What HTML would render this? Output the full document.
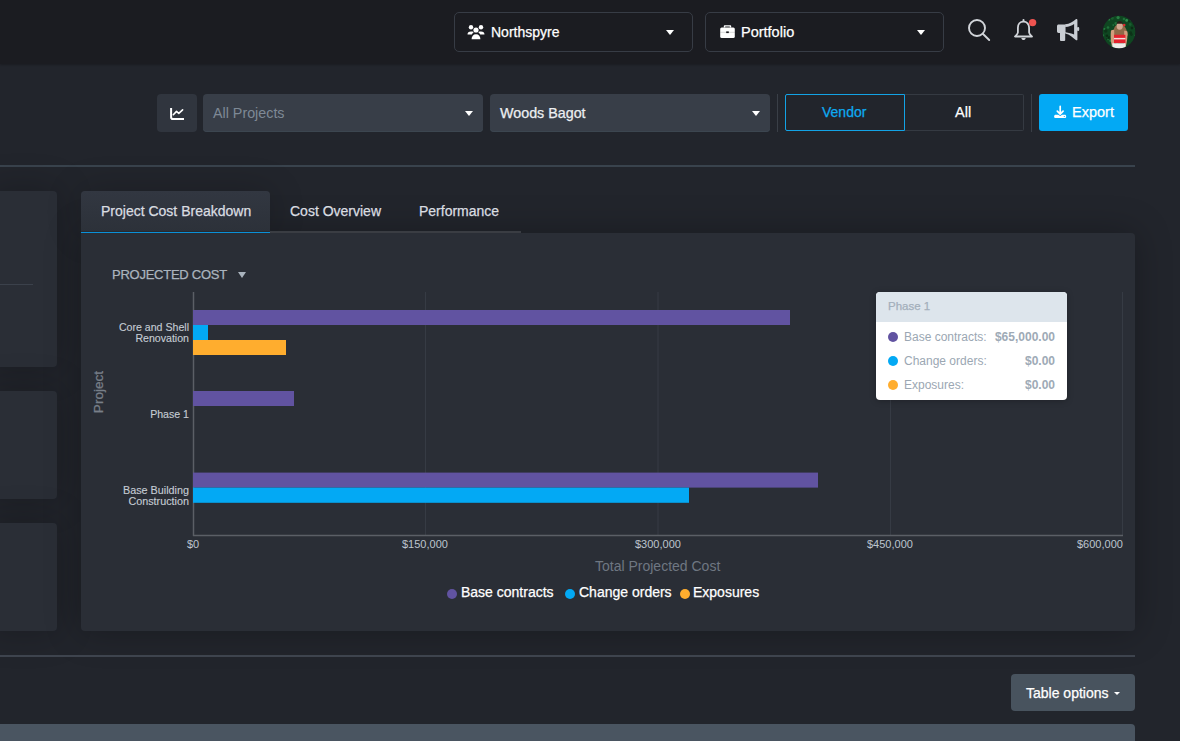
<!DOCTYPE html>
<html><head><meta charset="utf-8">
<style>
*{box-sizing:border-box;margin:0;padding:0}
html,body{width:1180px;height:741px;overflow:hidden;background:#22252c;font-family:"Liberation Sans",sans-serif;position:relative}
.a{position:absolute}
.t{position:absolute;white-space:nowrap;line-height:1}
#top{left:0;top:0;width:1180px;height:64px;background:#1b1c21;box-shadow:0 1px 2px rgba(0,0,0,.25)}
.dd{position:absolute;top:12px;height:40px;width:239px;border:1px solid #373c45;border-radius:5px;background:#1b1c21}
.caret{position:absolute;width:0;height:0;border-left:4.6px solid transparent;border-right:4.6px solid transparent;border-top:5.6px solid #fff}
.sel{position:absolute;top:94px;height:38px;background:#383e48;border-radius:4px}
.bb{box-shadow:inset 0 -1px 0 #3c4650}
.panel{position:absolute;background:#2a2e36;border-radius:4px;box-shadow:0 0 36px rgba(0,0,0,.25)}
.med{-webkit-text-stroke:0.25px currentColor}
.ml{-webkit-text-stroke:0.12px currentColor}
</style></head>
<body>
<!-- top bar -->
<div id="top" class="a"></div>
<div class="dd" style="left:454px">
  <svg class="a" style="left:12px;top:12px" width="18" height="15" viewBox="0 0 18 15">
    <g fill="#fff">
      <circle cx="4" cy="2.3" r="2.2"/><circle cx="14" cy="2.3" r="2.2"/><circle cx="9" cy="5" r="2.6"/>
      <path d="M0.5 9.5c0-2 1.2-3 3.5-3s2.2.6 2.6 1c-1 .6-1.6 1.4-1.8 2H.5z"/>
      <path d="M17.5 9.5c0-2-1.2-3-3.5-3s-2.2.6-2.6 1c1 .6 1.6 1.4 1.8 2h4.3z"/>
      <path d="M4.6 14.3c0-3 1.6-5 4.4-5s4.4 2 4.4 5z"/>
    </g>
  </svg>
  <span class="t med" style="left:36px;top:12px;font-size:14px;color:#fff">Northspyre</span>
  <div class="caret" style="left:211px;top:17px"></div>
</div>
<div class="dd" style="left:705px">
  <svg class="a" style="left:14px;top:12px" width="15" height="14" viewBox="0 0 15 14">
    <g fill="#fff">
      <path d="M4.8 0.2h5.4c.6 0 1 .4 1 1V2.6H9.8V1.6H5.2v1H3.8V1.2c0-.6.4-1 1-1z"/>
      <rect x="0.2" y="2.5" width="14.6" height="10.6" rx="1.5"/>
    </g>
    <rect x="0.2" y="6.9" width="14.6" height=".5" fill="#1b1c21" opacity=".35"/>
    <rect x="6.2" y="6.4" width="2.6" height="1.7" fill="#1b1c21"/>
  </svg>
  <span class="t med" style="left:35px;top:12px;font-size:14.5px;color:#fff">Portfolio</span>
  <div class="caret" style="left:211px;top:17px"></div>
</div>
<!-- search -->
<svg class="a" style="left:964px;top:15px" width="30" height="30" viewBox="0 0 30 30">
  <circle cx="13" cy="13" r="8" fill="none" stroke="#d2d5da" stroke-width="1.9"/>
  <line x1="18.8" y1="18.8" x2="25.2" y2="25" stroke="#d2d5da" stroke-width="1.9" stroke-linecap="round"/>
</svg>
<!-- bell -->
<svg class="a" style="left:1012px;top:17px" width="26" height="26" viewBox="0 0 26 26">
  <path d="M11.5 4.6C8 4.6 5.9 7.3 5.9 10.8V15.6C5.9 16.9 4.3 18.3 3 19.5H20C18.7 18.3 17.1 16.9 17.1 15.6V10.8C17.1 7.3 15 4.6 11.5 4.6Z" fill="none" stroke="#d2d5da" stroke-width="1.8" stroke-linejoin="round"/>
  <rect x="10.5" y="1.9" width="2" height="2.8" rx="1" fill="#d2d5da"/>
  <path d="M9.3 21h4.4c-.3 1.4-1.1 2.1-2.2 2.1S9.6 22.4 9.3 21z" fill="#d2d5da"/>
  <circle cx="20.6" cy="5.6" r="3.7" fill="#ef5350"/>
</svg>
<!-- megaphone -->
<svg class="a" style="left:1050px;top:12px" width="34" height="34" viewBox="0 0 34 34">
  <g fill="#c9cdd3">
    <path d="M8.6 12.4h7v8.5h-7c-.9 0-1.6-.7-1.6-1.6v-5.3c0-.9.7-1.6 1.6-1.6z"/>
    <path d="M10 20.5h5.2v7.6c0 .5-.4.9-.9.9h-3.4c-.5 0-.9-.4-.9-.9z"/>
    <path d="M15.2 12.3c4.5-.3 7.8-2.5 10.6-5 .6-.5 1.6-.1 1.6.7v19.4c0 .8-1 1.2-1.6.7-2.8-2.5-6.1-5.6-10.6-6.6z"/>
    <rect x="27" y="15" width="2.2" height="4" rx="1.1"/>
  </g>
  <path d="M15.6 15.1c3.3-.2 6-1.3 8.5-3v10.4c-2.5-1-5.2-1.8-8.5-2.3z" fill="#1b1c21"/>
</svg>
<!-- avatar -->
<svg class="a" style="left:1102px;top:15px" width="34" height="34" viewBox="0 0 34 34">
  <defs>
    <clipPath id="cc"><circle cx="17" cy="17" r="16.3"/></clipPath>
  </defs>
  <g clip-path="url(#cc)">
    <rect width="34" height="34" fill="#0f4621"/>
    <circle cx="15.4" cy="19.0" r="1.7" fill="#0d2e16" opacity=".8"/><circle cx="15.4" cy="29.1" r="0.9" fill="#3aa05a" opacity=".8"/><circle cx="16.2" cy="20.9" r="0.9" fill="#0d2e16" opacity=".8"/><circle cx="10.3" cy="3.1" r="1.6" fill="#1b6432" opacity=".8"/><circle cx="21.6" cy="20.2" r="1.1" fill="#0d2e16" opacity=".8"/><circle cx="22.2" cy="20.9" r="0.9" fill="#2f8c4c" opacity=".8"/><circle cx="28.3" cy="2.1" r="0.7" fill="#237a3e" opacity=".8"/><circle cx="20.4" cy="26.5" r="1.1" fill="#3aa05a" opacity=".8"/><circle cx="28.6" cy="17.7" r="1.4" fill="#0d2e16" opacity=".8"/><circle cx="0.2" cy="2.9" r="1.4" fill="#0d2e16" opacity=".8"/><circle cx="33.9" cy="33.9" r="1.6" fill="#1b6432" opacity=".8"/><circle cx="8.6" cy="25.8" r="1.3" fill="#2f8c4c" opacity=".8"/><circle cx="2.4" cy="26.1" r="1.1" fill="#0a2612" opacity=".8"/><circle cx="13.1" cy="32.6" r="1.6" fill="#2f8c4c" opacity=".8"/><circle cx="7.3" cy="31.5" r="0.8" fill="#0d2e16" opacity=".8"/><circle cx="33.3" cy="13.5" r="0.8" fill="#1b6432" opacity=".8"/><circle cx="6.7" cy="22.9" r="1.1" fill="#0a2612" opacity=".8"/><circle cx="11.3" cy="32.8" r="1.5" fill="#2f8c4c" opacity=".8"/><circle cx="4.6" cy="24.0" r="0.7" fill="#0d2e16" opacity=".8"/><circle cx="27.1" cy="6.0" r="1.3" fill="#0d2e16" opacity=".8"/><circle cx="17.3" cy="33.5" r="1.5" fill="#0d2e16" opacity=".8"/><circle cx="21.9" cy="4.0" r="1.2" fill="#237a3e" opacity=".8"/><circle cx="0.0" cy="29.4" r="1.8" fill="#3aa05a" opacity=".8"/><circle cx="10.3" cy="30.1" r="0.9" fill="#0d2e16" opacity=".8"/><circle cx="33.9" cy="20.5" r="1.3" fill="#2f8c4c" opacity=".8"/><circle cx="33.6" cy="7.3" r="1.0" fill="#3aa05a" opacity=".8"/><circle cx="11.2" cy="10.1" r="0.8" fill="#2f8c4c" opacity=".8"/><circle cx="7.1" cy="21.6" r="0.7" fill="#0a2612" opacity=".8"/><circle cx="12.6" cy="15.4" r="1.8" fill="#0d2e16" opacity=".8"/><circle cx="28.3" cy="4.6" r="1.1" fill="#1b6432" opacity=".8"/><circle cx="5.2" cy="30.9" r="1.6" fill="#237a3e" opacity=".8"/><circle cx="24.7" cy="5.4" r="1.4" fill="#3aa05a" opacity=".8"/><circle cx="6.7" cy="32.3" r="1.7" fill="#3aa05a" opacity=".8"/><circle cx="2.7" cy="1.6" r="0.8" fill="#3aa05a" opacity=".8"/><circle cx="32.7" cy="8.1" r="1.5" fill="#0a2612" opacity=".8"/><circle cx="14.3" cy="30.8" r="1.2" fill="#3aa05a" opacity=".8"/><circle cx="6.0" cy="24.5" r="0.8" fill="#237a3e" opacity=".8"/><circle cx="16.3" cy="22.2" r="1.4" fill="#2f8c4c" opacity=".8"/><circle cx="9.5" cy="31.2" r="0.9" fill="#2f8c4c" opacity=".8"/><circle cx="2.4" cy="14.0" r="1.0" fill="#2f8c4c" opacity=".8"/><circle cx="6.0" cy="12.5" r="1.3" fill="#237a3e" opacity=".8"/><circle cx="3.1" cy="4.7" r="1.2" fill="#0a2612" opacity=".8"/><circle cx="22.3" cy="23.5" r="1.3" fill="#237a3e" opacity=".8"/><circle cx="20.1" cy="31.4" r="1.2" fill="#0a2612" opacity=".8"/><circle cx="23.8" cy="32.7" r="0.7" fill="#1b6432" opacity=".8"/><circle cx="2.5" cy="2.3" r="1.0" fill="#237a3e" opacity=".8"/><circle cx="34.0" cy="2.6" r="1.3" fill="#1b6432" opacity=".8"/><circle cx="1.5" cy="31.8" r="1.5" fill="#237a3e" opacity=".8"/><circle cx="27.0" cy="31.1" r="1.1" fill="#1b6432" opacity=".8"/><circle cx="16.1" cy="2.6" r="1.6" fill="#2f8c4c" opacity=".8"/><circle cx="29.4" cy="19.5" r="1.4" fill="#0d2e16" opacity=".8"/><circle cx="12.9" cy="0.4" r="0.8" fill="#2f8c4c" opacity=".8"/><circle cx="21.7" cy="33.8" r="1.7" fill="#1b6432" opacity=".8"/><circle cx="11.2" cy="31.8" r="1.5" fill="#0d2e16" opacity=".8"/><circle cx="15.0" cy="28.5" r="0.8" fill="#3aa05a" opacity=".8"/><circle cx="1.0" cy="20.4" r="1.2" fill="#237a3e" opacity=".8"/><circle cx="32.6" cy="3.8" r="1.6" fill="#1b6432" opacity=".8"/><circle cx="31.3" cy="8.7" r="0.7" fill="#0a2612" opacity=".8"/><circle cx="4.9" cy="20.8" r="1.3" fill="#0a2612" opacity=".8"/><circle cx="22.4" cy="15.0" r="1.7" fill="#0a2612" opacity=".8"/><circle cx="13.8" cy="8.5" r="1.4" fill="#237a3e" opacity=".8"/><circle cx="29.9" cy="13.1" r="1.3" fill="#0a2612" opacity=".8"/><circle cx="7.1" cy="4.6" r="1.1" fill="#2f8c4c" opacity=".8"/><circle cx="24.2" cy="32.3" r="1.0" fill="#237a3e" opacity=".8"/><circle cx="3.8" cy="16.0" r="1.7" fill="#0d2e16" opacity=".8"/><circle cx="13.0" cy="17.7" r="1.4" fill="#1b6432" opacity=".8"/><circle cx="28.5" cy="33.4" r="1.2" fill="#2f8c4c" opacity=".8"/><circle cx="28.2" cy="9.5" r="1.4" fill="#1b6432" opacity=".8"/><circle cx="24.1" cy="19.4" r="1.0" fill="#3aa05a" opacity=".8"/><circle cx="0.6" cy="4.6" r="1.2" fill="#2f8c4c" opacity=".8"/>
    <path d="M11.5 20.5c-.5-5 .5-9.5 3.5-10.5h5.5c3 1 4.5 5.5 5.5 10.5z" fill="#8e6a48"/>
    <path d="M9 15.5c1-.8 2.2-1 3.2-.8l.2 15.8H9.8c-1.2-4-1.4-11-.8-15z" fill="#d39c7c"/>
    <path d="M25.4 16.5c-1-.8-2.2-1-3.2-.8l-.2 15.8h1.8c1.2-4 2-11 1.6-15z" fill="#d39c7c"/>
    <ellipse cx="17.7" cy="11" rx="3.1" ry="3.8" fill="#d2a890"/>
    <path d="M14.4 8.8c.6-2 2-2.8 3.4-2.8s2.8.8 3.3 2.8z" fill="#2a1e18"/>
    <path d="M12 19.7h11.4l.1 8.6H12z" fill="#e3222c"/>
    <rect x="12" y="22.9" width="11.4" height="1.5" fill="#f3dcdc"/>
    <path d="M10.4 28.3h13l.4 6h-13.6z" fill="#efeeea"/>
    <circle cx="22.2" cy="10" r="1.3" fill="#e3262e"/>
  </g>
</svg>

<!-- toolbar row -->
<div class="sel" style="left:157px;width:40px;background:#30353e">
  <svg class="a" style="left:12px;top:13px" width="16" height="14" viewBox="0 0 16 14">
    <path d="M2.1 0.9V10.2Q2.1 12 3.9 12H15" fill="none" stroke="#fff" stroke-width="2"/>
    <path d="M4.3 7.7l3.2-3.3 2.3 2 3.8-3.6" fill="none" stroke="#fff" stroke-width="1.6" stroke-linecap="round" stroke-linejoin="round"/>
  </svg>
</div>
<div class="sel bb" style="left:203px;width:280px">
  <span class="t" style="left:10px;top:12px;font-size:14.3px;color:#7e8996">All Projects</span>
  <div class="caret" style="left:262px;top:17px;border-left-width:4.5px;border-right-width:4.5px;border-top-width:5px"></div>
</div>
<div class="sel bb" style="left:490px;width:280px">
  <span class="t med" style="left:10px;top:12px;font-size:14.3px;color:#eceef1">Woods Bagot</span>
  <div class="caret" style="left:262px;top:17px;border-left-width:4.5px;border-right-width:4.5px;border-top-width:5px"></div>
</div>
<div class="a" style="left:777px;top:94px;width:1px;height:38px;background:#3a3f47"></div>
<div class="a" style="left:785px;top:94px;width:120px;height:37px;border:1px solid #13a3e6;border-radius:2px 0 0 2px"></div>
<span class="t med" style="left:822px;top:105px;font-size:14px;color:#0eaaf2">Vendor</span>
<div class="a" style="left:905px;top:94px;width:119px;height:37px;border:1px solid #353a42;border-left:none;border-radius:0 2px 2px 0"></div>
<span class="t med" style="left:955px;top:105px;font-size:14.5px;color:#fff">All</span>
<div class="a" style="left:1031px;top:94px;width:1px;height:38px;background:#3a3f47"></div>
<div class="a" style="left:1039px;top:94px;width:89px;height:37px;background:#03a9f4;border-radius:3px">
  <svg class="a" style="left:14px;top:11px" width="15" height="15" viewBox="0 0 15 15">
    <path d="M7.2 1.4v7.6M4.3 6.2l2.9 2.9 2.9-2.9" fill="none" stroke="#fff" stroke-width="1.7" stroke-linecap="round" stroke-linejoin="round"/>
    <path d="M2.6 9.8h2.6l2 1.2 2-1.2h2.6c.8 0 1.4.7 1.4 1.6s-.6 1.6-1.4 1.6H2.6c-.8 0-1.5-.7-1.5-1.6s.7-1.6 1.5-1.6z" fill="#fff"/>
    <circle cx="11.3" cy="11.5" r=".6" fill="#03a9f4"/>
  </svg>
  <span class="t med" style="left:33px;top:11px;font-size:14.5px;color:#fff">Export</span>
</div>
<div class="a" style="left:0;top:165px;width:1135px;height:2px;background:#39434d"></div>

<!-- left panels -->
<div class="panel" style="left:-10px;top:191px;width:67px;height:176px">
  <div class="a" style="left:10px;top:93px;width:33px;height:1px;background:#3b414b"></div>
</div>
<div class="panel" style="left:-10px;top:391px;width:67px;height:108px"></div>
<div class="panel" style="left:-10px;top:523px;width:67px;height:108px"></div>

<!-- chart card -->
<div class="a" style="left:81px;top:233px;width:1054px;height:398px;box-shadow:0 0 36px rgba(0,0,0,.28);border-radius:4px"></div>
<div class="a" style="left:81px;top:191px;width:189px;height:42px;box-shadow:0 0 36px rgba(0,0,0,.2);border-radius:4px"></div>
<div class="a" style="left:81px;top:191px;width:189px;height:42px;background:linear-gradient(#323741,#2c3139);border-radius:4px 4px 0 0"></div>
<div class="a" style="left:81px;top:231px;width:440px;height:2px;background:#3a3d43"></div>
<div class="a" style="left:81px;top:231px;width:189px;height:1px;background:#272a30"></div>
<div class="a" style="left:81px;top:232px;width:189px;height:1px;background:#0a90d8"></div>
<span class="t med" style="left:101px;top:204px;font-size:14px;color:#dadde1">Project Cost Breakdown</span>
<span class="t med" style="left:290px;top:204px;font-size:14px;color:#dadde1">Cost Overview</span>
<span class="t med" style="left:419px;top:204px;font-size:14px;color:#dadde1">Performance</span>
<div class="a" style="left:81px;top:233px;width:1054px;height:398px;background:#2a2e36;border-radius:0 4px 4px 4px"></div>

<span class="t med" style="left:112px;top:268px;font-size:13px;letter-spacing:-0.25px;color:#aab4be">PROJECTED COST</span>
<div class="caret" style="left:238px;top:272px;border-left-width:4.5px;border-right-width:4.5px;border-top-width:6px;border-top-color:#a9b3bd"></div>

<!-- chart -->
<svg class="a" style="left:0;top:0" width="1180" height="741" viewBox="0 0 1180 741">
  <g stroke="#363b44" stroke-width="1">
    <line x1="425.5" y1="292" x2="425.5" y2="535"/>
    <line x1="658" y1="292" x2="658" y2="535"/>
    <line x1="890.5" y1="292" x2="890.5" y2="535"/>
    <line x1="1122.5" y1="292" x2="1122.5" y2="535"/>
  </g>
  <line x1="193.5" y1="292" x2="193.5" y2="536" stroke="#5b5f66" stroke-width="1.5"/>
  <line x1="193" y1="535.5" x2="1123" y2="535.5" stroke="#5b5f66" stroke-width="1.5"/>
  <rect x="193" y="310" width="597" height="15" fill="#6153a1"/>
  <rect x="193" y="325" width="15" height="15" fill="#03a9f4"/>
  <rect x="193" y="340" width="93" height="15" fill="#ffad2e"/>
  <rect x="193" y="391" width="101" height="15" fill="#6153a1"/>
  <rect x="193" y="472.6" width="625" height="15" fill="#6153a1"/>
  <rect x="193" y="487.6" width="496" height="15.2" fill="#03a9f4"/>
</svg>
<span class="t ml" style="right:991px;top:322px;font-size:10.6px;color:#c5ccd4;text-align:right;line-height:11px">Core and Shell<br>Renovation</span>
<span class="t ml" style="right:991px;top:409px;font-size:10.6px;color:#c5ccd4;text-align:right">Phase 1</span>
<span class="t ml" style="right:991px;top:485px;font-size:10.8px;color:#c5ccd4;text-align:right;line-height:11px">Base Building<br>Construction</span>
<span class="t" style="left:187px;top:539px;font-size:11px;color:#bdc5ce">$0</span>
<span class="t" style="left:402px;top:539px;font-size:11px;color:#bdc5ce">$150,000</span>
<span class="t" style="left:635px;top:539px;font-size:11px;color:#bdc5ce">$300,000</span>
<span class="t" style="left:867px;top:539px;font-size:11px;color:#bdc5ce">$450,000</span>
<span class="t" style="left:1077px;top:539px;font-size:11px;color:#bdc5ce">$600,000</span>
<span class="t" style="left:595px;top:559px;font-size:14px;color:#6f7782">Total Projected Cost</span>
<span class="t med" style="left:98.5px;top:392px;font-size:13.6px;color:#787f89;transform:translate(-50%,-50%) rotate(-90deg)">Project</span>

<!-- legend -->
<div class="a" style="left:447px;top:589px;width:10px;height:10px;border-radius:50%;background:#6153a1"></div>
<span class="t med" style="left:461px;top:585px;font-size:14px;color:#fff">Base contracts</span>
<div class="a" style="left:565px;top:589px;width:10px;height:10px;border-radius:50%;background:#03a9f4"></div>
<span class="t med" style="left:579px;top:585px;font-size:14px;color:#fff">Change orders</span>
<div class="a" style="left:680px;top:589px;width:10px;height:10px;border-radius:50%;background:#ffad2e"></div>
<span class="t med" style="left:693px;top:585px;font-size:14px;color:#fff">Exposures</span>

<!-- tooltip -->
<div class="a" style="left:876px;top:292px;width:191px;height:108px;background:#fff;border-radius:4px;overflow:hidden;box-shadow:0 1px 6px rgba(0,0,0,.25)">
  <div class="a" style="left:0;top:0;width:191px;height:30px;background:#dde5ec"></div>
  <span class="t med" style="left:12px;top:9px;font-size:11.5px;color:#a3afbb">Phase 1</span>
  <div class="a" style="left:12px;top:40px;width:10px;height:10px;border-radius:50%;background:#6153a1"></div>
  <span class="t" style="left:28px;top:39px;font-size:12px;color:#9ba7b3">Base contracts:</span>
  <span class="t" style="right:12px;top:39px;font-size:12px;font-weight:700;color:#9eaab6">$65,000.00</span>
  <div class="a" style="left:12px;top:64px;width:10px;height:10px;border-radius:50%;background:#03a9f4"></div>
  <span class="t" style="left:28px;top:63px;font-size:12px;color:#9ba7b3">Change orders:</span>
  <span class="t" style="right:12px;top:63px;font-size:12px;font-weight:700;color:#9eaab6">$0.00</span>
  <div class="a" style="left:12px;top:88px;width:10px;height:10px;border-radius:50%;background:#ffad2e"></div>
  <span class="t" style="left:28px;top:87px;font-size:12px;color:#9ba7b3">Exposures:</span>
  <span class="t" style="right:12px;top:87px;font-size:12px;font-weight:700;color:#9eaab6">$0.00</span>
</div>

<!-- bottom -->
<div class="a" style="left:0;top:655px;width:1135px;height:2px;background:#3e444e"></div>
<div class="a" style="left:1011px;top:674px;width:123.5px;height:37px;background:#48535e;border-radius:4px">
  <span class="t med" style="left:15px;top:12px;font-size:14px;color:#fff">Table options</span>
  <div class="caret" style="left:103px;top:18px;border-left-width:3.5px;border-right-width:3.5px;border-top-width:3.5px"></div>
</div>
<div class="a" style="left:-4px;top:724px;width:1139px;height:30px;background:#4a5561;border-radius:4px"></div>
</body></html>
